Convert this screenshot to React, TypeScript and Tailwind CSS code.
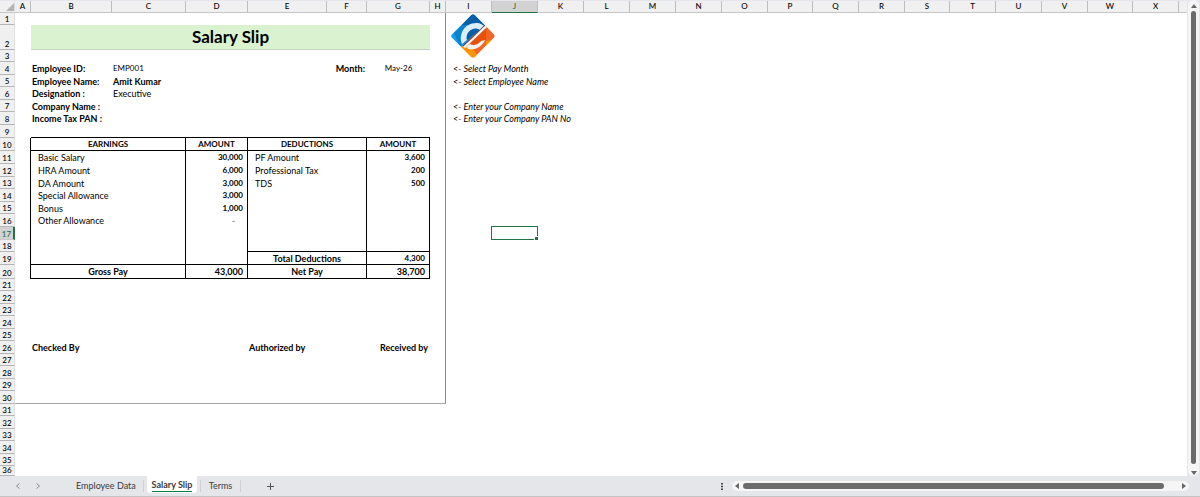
import clsx from "clsx";
import { type ReactNode } from "react";

type Cell = {
    text?: ReactNode;
    span?: number;
    className?: string;
};

const columns = [
    { name: "A", width: "w-[16px]" },
    { name: "B", width: "w-[81px]" },
    { name: "C", width: "w-[74px]" },
    { name: "D", width: "w-[62px]" },
    { name: "E", width: "w-[79px]" },
    { name: "F", width: "w-[40px]" },
    { name: "G", width: "w-[63px]" },
    { name: "H", width: "w-[16px]" },
    { name: "I", width: "w-[46px]" },
    { name: "J", width: "w-[46px]" },
    { name: "K", width: "w-[46px]" },
    { name: "L", width: "w-[46px]" },
    { name: "M", width: "w-[46px]" },
    { name: "N", width: "w-[46px]" },
    { name: "O", width: "w-[46px]" },
    { name: "P", width: "w-[45px]" },
    { name: "Q", width: "w-[46px]" },
    { name: "R", width: "w-[46px]" },
    { name: "S", width: "w-[45px]" },
    { name: "T", width: "w-[46px]" },
    { name: "U", width: "w-[46px]" },
    { name: "V", width: "w-[46px]" },
    { name: "W", width: "w-[45px]" },
    { name: "X", width: "w-[46px]" },
];

const ROW_COUNT = 36;

const rowHeights: Record<number, string> = {
    1: "h-[12px]",
    2: "h-[25px]",
    3: "h-[12px]",
    5: "h-[12px]",
    7: "h-[12px]",
    13: "h-[12px]",
    15: "h-[12px]",
    18: "h-[12px]",
    20: "h-[14px]",
    21: "h-[12px]",
    23: "h-[12px]",
    25: "h-[12px]",
    27: "h-[12px]",
    29: "h-[12px]",
    31: "h-[12px]",
    33: "h-[12px]",
    35: "h-[12px]",
    36: "h-[10px]",
};

const label = "pl-px font-bold";
const hint = "pl-[7px] italic";
const heading = "border-r border-b border-black text-center text-[8px] font-bold";
const item = "border-r border-black pl-[7px]";
const amount = "border-r border-black pr-[4px] text-right text-[8px] font-bold";
const total = "border-r border-b border-black text-center font-bold";
const totalAmount = "border-r border-b border-black pr-[4px] text-right font-bold";

const earnings = ["Basic Salary", "HRA Amount", "DA Amount", "Special Allowance", "Bonus", "Other Allowance"];
const earned = ["30,000", "6,000", "3,000", "3,000", "1,000", "-"];
const deductions = ["PF Amount", "Professional Tax", "TDS"];
const deducted = ["3,600", "200", "500"];

const cells: Record<string, Cell> = {
    I1: { text: <Logo />, className: "relative" },
    B2: { text: "Salary Slip", span: 6, className: "border-b border-[#c3cfc0] bg-[#daf2d0] text-center text-[17px] leading-[20px] font-bold" },
    B4: { text: "Employee ID:", className: label },
    C4: { text: "EMP001", className: "pl-px text-[8px]" },
    F4: { text: "Month:", className: "pr-[2px] text-right font-bold" },
    G4: { text: "May-26", className: "text-center text-[8px]" },
    I4: { text: "<- Select Pay Month", span: 4, className: hint },
    B5: { text: "Employee Name:", className: label },
    C5: { text: "Amit Kumar", className: label },
    I5: { text: "<- Select Employee Name", span: 4, className: hint },
    B6: { text: "Designation :", className: label },
    C6: { text: "Executive", className: "pl-px" },
    B7: { text: "Company Name :", className: label },
    I7: { text: "<- Enter your Company Name", span: 4, className: hint },
    B8: { text: "Income Tax PAN :", className: label },
    I8: { text: "<- Enter your Company PAN No", span: 4, className: hint },
    B9: { span: 6, className: "border-b border-black" },
    B10: { text: "EARNINGS", span: 2, className: heading },
    D10: { text: "AMOUNT", className: heading },
    E10: { text: "DEDUCTIONS", span: 2, className: heading },
    G10: { text: "AMOUNT", className: heading },
    J17: { text: <SelectionBox />, className: "relative" },
    B20: { text: "Gross Pay", span: 2, className: total },
    D20: { text: "43,000", className: totalAmount },
    E20: { text: "Net Pay", span: 2, className: total },
    G20: { text: "38,700", className: totalAmount },
    B26: { text: "Checked By", className: label },
    E26: { text: "Authorized by", className: label },
    G26: { text: "Received by", className: "pr-[2px] text-right font-bold" },
};

for (let row = 11; row <= 19; row++) {
    const i = row - 11;
    const earningsEnd = row === 19 && "border-b";
    const deductionsEnd = row >= 18 && "border-b";
    cells[`B${row}`] = { text: earnings[i], span: 2, className: clsx(item, earningsEnd) };
    cells[`D${row}`] =
        earned[i] === "-"
            ? { text: "-", className: "border-r border-black pr-[12px] text-right text-gray-500" }
            : { text: earned[i], className: clsx(amount, earningsEnd) };
    cells[`E${row}`] = { text: deductions[i], span: 2, className: clsx(item, deductionsEnd) };
    cells[`G${row}`] = { text: deducted[i], className: clsx(amount, deductionsEnd) };
}
cells.E19 = { text: "Total Deductions", span: 2, className: total };
cells.G19 = { text: "4,300", className: clsx(amount, "border-b") };

function SelectionBox() {
    return (
        <div className="absolute -top-px right-0 bottom-0 -left-px border border-[#217346]">
            <span className="absolute -right-px -bottom-px size-[3px] bg-[#217346] outline outline-white" />
        </div>
    );
}

function Logo() {
    return (
        <svg viewBox="0 0 46 46" className="absolute top-0 left-[4px] size-[46px]" role="img" aria-label="Logo">
            <defs>
                <clipPath id="diamond">
                    <rect x="7" y="7" width="32" height="32" rx="3" transform="rotate(45 23 23)" />
                </clipPath>
            </defs>
            <g clipPath="url(#diamond)">
                <path d="M0 0H46L0 46Z" fill="#0a84d0" />
                <path d="M23 0L46 23L34 12L12 12Z" fill="#0560a8" />
                <path d="M0 23L10 12L14 34L8 40Z" fill="#18a0e6" />
                <path d="M4 20L12 13L13 30L10 34Z" fill="#0a84d0" />
                <path d="M46 0V46H0Z" fill="#f26522" />
                <path d="M0 46L12 33L23 36L30 46Z" fill="#ff9500" />
                <path d="M36 28L46 26L36 38Z" fill="#ff9500" />
                <path d="M17 28L36 12V27L22 33Z" fill="#e8500c" />
            </g>
            <path d="M12 31C8 21 15 10 26 10C31 10 33 12 34 14L30 18C28 14 22 15 19 19C17 22 16 25 17 27Z" fill="#dcecf8" />
            <path d="M17 27C15 20 22 13 30 17Z" fill="#0560a8" />
            <path d="M13 34L36 12L37 14L15 35Z" fill="#f5f7fa" />
            <path d="M13 33L35 12" stroke="#34547c" strokeWidth="1" />
            <path d="M16 34C20 39 31 36 35 27L31 28C28 32 23 33 20 31Z" fill="#f2f2f2" />
        </svg>
    );
}

function SheetRow({ row }: { row: number }) {
    const tds: ReactNode[] = [];

    for (let i = 0; i < columns.length; i++) {
        const name = columns[i].name;
        const cell = cells[`${name}${row}`];
        tds.push(
            <td
                key={name}
                colSpan={cell?.span}
                className={clsx(
                    "p-0",
                    cell?.className,
                    name === "A" && row >= 10 && row <= 20 && "border-r border-black",
                    name === "H" && row <= 30 && "border-r border-r-[#8c8c8c]",
                    row === 30 && i < 8 && "border-b border-b-[#a6a6a6]",
                )}
            >
                {cell?.text}
            </td>
        );
        i += (cell?.span ?? 1) - 1;
    }

    return (
        <tr className={rowHeights[row] ?? "h-[13px]"}>
            <th
                scope="row"
                className={clsx(
                    "border-b p-0 text-center align-bottom text-[8px] font-medium",
                    row === 17
                        ? "border-r-2 border-r-[#217346] border-b-[#c8c8c8] bg-[#d2d2d2] text-[#217346]"
                        : "border-r border-r-[#e0e0e0] border-b-[#b5b5b5] bg-[#f0f0f0]"
                )}
            >
                {row}
            </th>
            {tds}
            <td className="p-0" />
        </tr>
    );
}

function Sheet() {
    return (
        <table className="w-full table-fixed border-separate border-spacing-0 bg-white text-[9px] leading-[9px] whitespace-nowrap text-black">
            <colgroup>
                <col className="w-[15px]" />
                {columns.map((column) => (
                    <col key={column.name} className={column.width} />
                ))}
                <col />
            </colgroup>
            <thead>
                <tr className="h-[12px] bg-[#f0f0f0]">
                    <td className="border-r border-b border-r-[#dcdcdc] border-b-[#c6c6c6] p-0">
                        <svg viewBox="0 0 8 8" className="ml-auto size-[8px]">
                            <path d="M8 0V8H0Z" fill="#b3b3b3" />
                        </svg>
                    </td>
                    {columns.map(({ name }) => (
                        <th
                            key={name}
                            scope="col"
                            className={clsx(
                                "border-r border-b border-r-[#bdbdbd] p-0 text-center text-[8px] font-medium",
                                name === "J" ? "border-b-[#217346] bg-[#d2d2d2] text-[#217346]" : "border-b-[#c6c6c6]"
                            )}
                        >
                            {name}
                        </th>
                    ))}
                    <td className="border-b border-[#c6c6c6] p-0" />
                </tr>
            </thead>
            <tbody>
                {Array.from({ length: ROW_COUNT }, (_, i) => (
                    <SheetRow key={i} row={i + 1} />
                ))}
            </tbody>
        </table>
    );
}

function Arrow({ path, name }: { path: string; name: string }) {
    return (
        <button type="button" aria-label={name} className="flex size-[6px] shrink-0 items-center justify-center">
            <svg viewBox="0 0 6 6" className="size-[6px]" fill="#666666">
                <path d={path} />
            </svg>
        </button>
    );
}

function VerticalScrollbar() {
    return (
        <div className="flex w-[13px] shrink-0 justify-center bg-[#e5e7ec]">
            <div className="flex w-[11px] flex-col items-center rounded-full bg-[#f5f5f5] pt-[3px]">
                <Arrow name="Scroll up" path="M3 1L6 5H0Z" />
                <div className="mt-[2px] mb-[6px] w-[5px] flex-1 rounded-full bg-[#6b6b6b]" />
                <Arrow name="Scroll down" path="M3 5L6 1H0Z" />
            </div>
        </div>
    );
}

function SheetTabs() {
    return (
        <footer className="flex h-[21px] shrink-0 border-b border-[#c4c4c4] bg-[#e4e6ea] pr-[11px] text-[9px] text-[#3b3b3b]">
            <nav className="flex flex-1 items-center">
                <button type="button" aria-label="Previous sheet" className="ml-[15px]">
                    <svg viewBox="0 0 6 6" className="size-[6px]" fill="none" stroke="#8a8a8a">
                        <path d="M4.5 0.5L1.5 3L4.5 5.5" />
                    </svg>
                </button>
                <button type="button" aria-label="Next sheet" className="ml-[14px]">
                    <svg viewBox="0 0 6 6" className="size-[6px]" fill="none" stroke="#8a8a8a">
                        <path d="M1.5 0.5L4.5 3L1.5 5.5" />
                    </svg>
                </button>
                <button type="button" className="ml-[28px] w-[75px] border-r border-[#cfd0d4] pl-[7px] text-left leading-[12px]">Employee Data</button>
                <button type="button" className="ml-[3px] flex h-[17px] w-[50px] justify-center self-start rounded-b-[3px] bg-white font-bold">
                    <span className="mt-[3px] h-[13px] border-b border-[#107c41] leading-[12px]">Salary Slip</span>
                </button>
                <button type="button" className="ml-[3px] w-[41px] border-x border-[#cfd0d4] leading-[12px]">Terms</button>
                <button type="button" aria-label="New sheet" className="ml-[26px]">
                    <svg viewBox="0 0 7 7" className="size-[7px]" stroke="#555555">
                        <path d="M3.5 0V7M0 3.5H7" />
                    </svg>
                </button>
            </nav>
            <div className="flex w-[468px] items-center">
                <svg viewBox="0 0 2 7" className="h-[7px] w-[2px]" fill="#444444">
                    <path d="M0 0H2V1.5H0ZM0 2.8H2V4.3H0ZM0 5.5H2V7H0Z" />
                </svg>
                <div className="ml-[9px] flex h-[10px] flex-1 items-center rounded-full bg-[#f5f5f5] px-[2px]">
                    <Arrow name="Scroll left" path="M1 3L5 0V6Z" />
                    <div className="mr-[17px] ml-[3px] h-[6px] flex-1 rounded-full bg-[#6b6b6b]" />
                    <Arrow name="Scroll right" path="M5 3L1 0V6Z" />
                </div>
            </div>
        </footer>
    );
}

export default function App() {
    return (
        <div className="flex h-screen flex-col overflow-hidden font-['Lato',sans-serif]">
            <main className="flex min-h-0 flex-1">
                <div className="min-w-0 flex-1 overflow-hidden border-t border-[#e5e7ed]">
                    <Sheet />
                </div>
                <VerticalScrollbar />
            </main>
            <SheetTabs />
        </div>
    );
}
